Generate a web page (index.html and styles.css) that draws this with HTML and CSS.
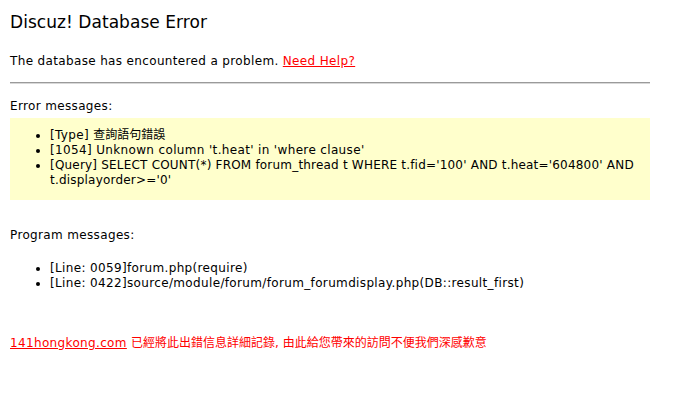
FILE: index.html
```html
<!DOCTYPE html>
<html>
<head>
<meta charset="utf-8">
<title>Discuz! Database Error</title>
<link rel="stylesheet" href="styles.css">
</head>
<body>
<div class="container">
  <h1 class="title">Discuz! Database Error</h1>
  <p class="intro">The database has encountered a problem. <a class="link" href="#">Need Help?</a></p>
  <div class="rule"></div>
  <p class="label">Error messages:</p>
  <div class="info">
    <ul class="list">
      <li>[Type] <span class="cjk">查詢語句錯誤</span></li>
      <li>[1054] Unknown column 't.heat' in 'where clause'</li>
      <li class="query">[Query] SELECT COUNT(*) FROM forum_thread t WHERE t.fid='100' AND t.heat='604800' AND t.displayorder&gt;='0'</li>
    </ul>
  </div>
  <p class="label label-program">Program messages:</p>
  <ul class="list list-program">
    <li>[Line: 0059]forum.php(require)</li>
    <li>[Line: 0422]source/module/forum/forum_forumdisplay.php(DB::result_first)</li>
  </ul>
  <p class="footer"><a class="link" href="#">141hongkong.com</a> <span class="cjk">已經將此出錯信息詳細記錄, 由此給您帶來的訪問不便我們深感歉意</span></p>
</div>
</body>
</html>
```

FILE: styles.css
```css
html, body {
  margin: 0;
  padding: 0;
  background: #ffffff;
}
body {
  color: #000000;
  font-family: "DejaVu Sans", Verdana, "Noto Sans CJK TC", sans-serif;
  font-size: 12px;
  line-height: 15px;
  letter-spacing: 0.35px;
}
.container {
  width: 640px;
  padding: 0 10px;
}
.title {
  margin: 10px 0 0;
  font-size: 17px;
  font-weight: normal;
  line-height: 24px;
  letter-spacing: 0.05px;
  color: #000000;
}
.intro {
  margin: 20px 0 0;
}
.link {
  color: #ff0000;
  text-decoration: underline;
}
.cjk {
  letter-spacing: 0;
}
.rule {
  margin-top: 13px;
  height: 0;
  border-top: 1px solid #9a9a9a;
  border-bottom: 1px solid #d8d8d8;
}
.label {
  margin: 15px 0 0;
}
.info {
  margin-top: 4px;
  background: #ffffcc;
  padding: 10px 0 12px;
}
.list {
  margin: 0;
  padding-left: 40px;
}
.query {
  letter-spacing: 0.2px;
}
.label-program {
  margin-top: 28px;
}
.list-program {
  margin-top: 18px;
}
.footer {
  margin: 45px 0 0;
  color: #ff0000;
}
```
